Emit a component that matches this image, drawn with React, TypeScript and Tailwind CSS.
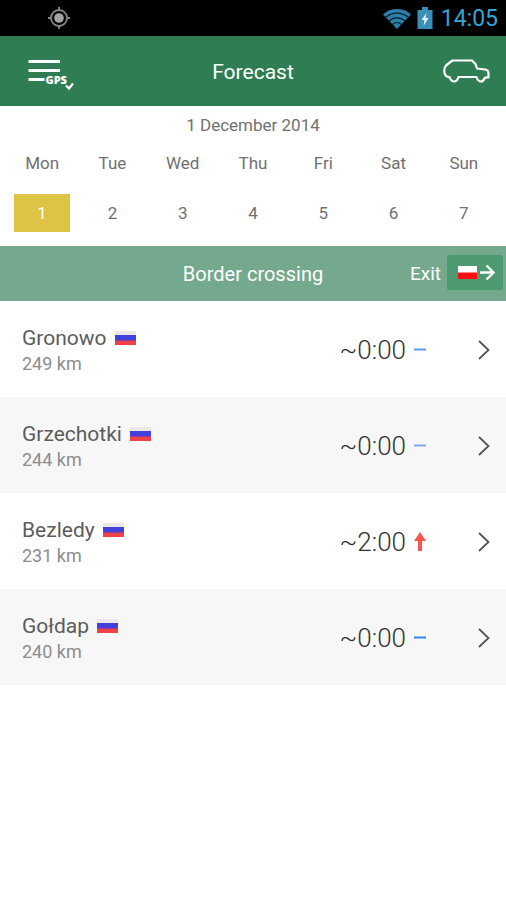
const days = [
  { label: "Mon", date: 1 },
  { label: "Tue", date: 2 },
  { label: "Wed", date: 3 },
  { label: "Thu", date: 4 },
  { label: "Fri", date: 5 },
  { label: "Sat", date: 6 },
  { label: "Sun", date: 7 },
]

type Crossing = {
  name: string
  distance: string
  wait: string
  trend: "up" | "same"
  trendColor: string
}

const crossings: Crossing[] = [
  { name: "Gronowo", distance: "249 km", wait: "~0:00", trend: "same", trendColor: "text-[#5c9bf8]" },
  { name: "Grzechotki", distance: "244 km", wait: "~0:00", trend: "same", trendColor: "text-[#7fa9ee]" },
  { name: "Bezledy", distance: "231 km", wait: "~2:00", trend: "up", trendColor: "text-[#f9564f]" },
  { name: "Gołdap", distance: "240 km", wait: "~0:00", trend: "same", trendColor: "text-[#3088ee]" },
]

function StatusBar() {
  return (
    <div className="flex h-9 items-center justify-between bg-black pr-2 pl-[47px]">
      <svg className="size-6" viewBox="0 0 24 24" fill="none" stroke="#858585">
        <circle cx="12" cy="12" r="8" strokeWidth="1.8" />
        <circle cx="12" cy="12" r="4.8" fill="#a3a3a3" stroke="none" />
        <path d="M12 1v4M12 19v4M1 12h4M19 12h4" strokeWidth="1.8" />
      </svg>
      <div className="flex items-center">
        <svg className="h-6 w-8" viewBox="0 0 32 24">
          <path d="M2 8.5C10 1.2 22 1.2 30 8.5L16 23z" fill="#2b7fa8" />
          <path
            d="M4.500 11.500C11 5.600 21 5.600 27.500 11.500M8 15c4.600-4.300 11.400-4.300 16 0M11.500 18.500c2.600-2.400 6.400-2.400 9 0"
            fill="none"
            stroke="#06202e"
            strokeWidth="1.3"
          />
        </svg>
        <svg className="ml-1 h-6 w-4" viewBox="0 0 16 24">
          <path d="M5 1h6v3h4.500v19H0.500V4H5z" fill="#3a8fb7" />
          <path d="M9.500 7L4.500 14h3l-1 6 5-8h-3z" fill="#e8f6fc" />
        </svg>
        <span className="ml-2 pt-0.5 text-[23px] leading-8 text-[#33a5d3]">14:05</span>
      </div>
    </div>
  )
}

function Header() {
  return (
    <header className="grid h-[70px] grid-cols-[1fr_auto_1fr] items-center bg-[#2f7e53] px-4 text-white">
      <button type="button" aria-label="GPS menu" className="ml-2 justify-self-start">
        <svg className="h-10 w-[50px]" viewBox="0 0 50 40">
          <path d="M4.500 10.500h31.500M4.500 19.500h31.500M4.500 28.500h16" fill="none" stroke="white" strokeWidth="3.200" />
          <text x="21.500" y="33" fill="white" fontSize="11" fontWeight="800" fontFamily="Open Sans, sans-serif">
            GPS
          </text>
          <path d="M42 34.500l3 3 4-5" fill="none" stroke="white" strokeWidth="2.200" />
        </svg>
      </button>
      <h1 className="pt-0.5 text-[21px] leading-8">Forecast</h1>
      <button type="button" aria-label="Vehicle type" className="justify-self-end">
        <svg
          className="h-7 w-12"
          viewBox="0 0 48 28"
          fill="none"
          stroke="white"
          strokeWidth="2.2"
          strokeLinejoin="round"
        >
          <path d="M7.500 20.500L4 19c-1-1-1.800-3-1.800-5.500S3 9.500 4.500 8L10.500 3.500H30L33.500 7l1.500 4.500 8 1c2.500.5 3.500 1.500 3.500 3.500v4.500H43c-1 2.500-2 4-4 4s-3.500-1.500-4.500-4.500H16.500c-.8 2.800-2 4.500-4.500 4.500s-3.500-1.700-4.500-4.500z" />
        </svg>
      </button>
    </header>
  )
}

function Calendar() {
  return (
    <section className="bg-white px-[7px] pt-[7px] pb-3.5 text-center text-[#707070]">
      <p className="text-[17px] leading-6">1 December 2014</p>
      <div className="mt-3.5 grid grid-cols-7">
        {days.map((day) => (
          <button key={day.label} type="button" className="flex flex-col gap-[19px] px-[7px] text-[17px]">
            <span className="w-full leading-6">{day.label}</span>
            <span className={day.date === 1 ? "w-full bg-[#dfc344] leading-[38px] text-white" : "w-full leading-[38px]"}>
              {day.date}
            </span>
          </button>
        ))}
      </div>
    </section>
  )
}

function RussianFlag() {
  return (
    <svg className="h-[14px] w-[21px]" viewBox="0 0 21 14">
      <path d="M0 0h21v5H0z" fill="#e9e9ea" />
      <path d="M0 4h21v6H0z" fill="#433fdb" />
      <path d="M0 9.500h21V14H0z" fill="#ee4248" />
    </svg>
  )
}

function Trend({ crossing }: { crossing: Crossing }) {
  return (
    <svg className={`h-5 w-3 ${crossing.trendColor}`} viewBox="0 0 12 20" fill="currentColor">
      {crossing.trend === "up" ? <path d="M6 0l6 9H8v10H4V9H0z" /> : <path d="M0 8.500h12v2H0z" />}
    </svg>
  )
}

function CrossingRow({ crossing }: { crossing: Crossing }) {
  return (
    <li className="odd:bg-white even:bg-[#f7f7f7]">
      <a href="#" className="flex h-24 items-center pt-0.5 pr-3 pl-[22px]">
        <div className="flex-1">
          <div className="flex items-center gap-2">
            <span className="text-[21px] leading-7 text-[#5c5c5c]">{crossing.name}</span>
            <RussianFlag />
          </div>
          <p className="text-[18px] leading-6 text-[#8c8c8c]">{crossing.distance}</p>
        </div>
        <span className="mr-2 text-[26px] leading-8 font-light text-[#333]">{crossing.wait}</span>
        <Trend crossing={crossing} />
        <svg className="ml-12 h-6 w-5" viewBox="0 0 20 24" fill="none" stroke="#555" strokeWidth="1.8">
          <path d="M5 3l9.500 9L5 21" />
        </svg>
      </a>
    </li>
  )
}

export default function App() {
  return (
    <main className="min-h-screen bg-white font-['Roboto',sans-serif]">
      <StatusBar />
      <Header />
      <Calendar />
      <div className="grid h-[55px] grid-cols-[1fr_auto_1fr] items-center bg-[#74a98d] text-white">
        <h2 className="col-start-2 text-[20px] leading-8">Border crossing</h2>
        <div className="flex items-center gap-1.5 justify-self-end pr-[3px]">
          <label htmlFor="direction" className="text-[19px] leading-8">
            Exit
          </label>
          <button
            id="direction"
            type="button"
            aria-label="Exit from Poland"
            className="mb-0.5 flex h-[35px] w-14 items-center justify-center rounded-xs bg-[#4e9a70]"
          >
            <svg className="h-5 w-10" viewBox="0 0 40 20">
              <path d="M3 3h19v7H3z" fill="white" />
              <path d="M3 9.500h19V16H3z" fill="#fb0d12" />
              <path d="M25 9.500h13M31.500 2.500l7 7-7 7" fill="none" stroke="white" strokeWidth="2.400" />
            </svg>
          </button>
        </div>
      </div>
      <ul>
        {crossings.map((crossing) => (
          <CrossingRow key={crossing.name} crossing={crossing} />
        ))}
      </ul>
    </main>
  )
}
